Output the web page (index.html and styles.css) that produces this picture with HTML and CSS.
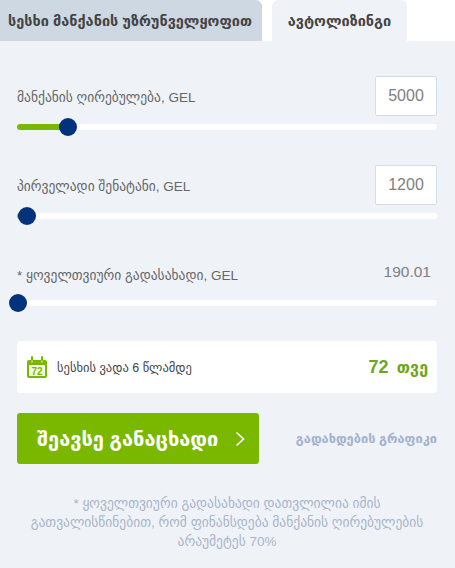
FILE: index.html
```html
<!DOCTYPE html>
<html lang="ka">
<head>
    <meta charset="UTF-8">
    <meta name="viewport" content="width=device-width, initial-scale=1.0">
    <title>ავტოლიზინგი</title>
    <link rel="stylesheet" href="styles.css">
</head>
<body>
<div class="tabs">
    <a href="#" class="tab tab-first">სესხი მანქანის უზრუნველყოფით</a>
    <a href="#" class="tab tab-active">ავტოლიზინგი</a>
</div>

<div class="panel">
    <!-- Sliders -->
    <div class="field field-price">
        <div class="field-top">
            <label class="field-label">მანქანის ღირებულება, GEL</label>
            <div class="field-input">5000</div>
        </div>
        <div class="track">
            <div class="fill" style="width: 51px"><span class="thumb"></span></div>
        </div>
    </div>

    <div class="field field-down">
        <div class="field-top">
            <label class="field-label">პირველადი შენატანი, GEL</label>
            <div class="field-input">1200</div>
        </div>
        <div class="track">
            <div class="fill" style="width: 10px"><span class="thumb"></span></div>
        </div>
    </div>

    <div class="field field-monthly">
        <div class="field-top">
            <label class="field-label">* ყოველთვიური გადასახადი, GEL</label>
            <div class="field-value">190.01</div>
        </div>
        <div class="track">
            <div class="fill" style="width: 1px"><span class="thumb"></span></div>
        </div>
    </div>

    <!-- Loan term -->
    <div class="term">
        <svg class="term-icon" width="20" height="23" viewBox="0 0 20 23">
            <path d="M2 4h16a2 2 0 0 1 2 2v14a2 2 0 0 1-2 2H2a2 2 0 0 1-2-2V6a2 2 0 0 1 2-2z" fill="#7ab800"/>
            <rect x="2" y="9" width="16" height="11" fill="#f4f9e8"/>
            <path d="M5 1v4M15 1v4" stroke="#7ab800" stroke-width="2" stroke-linecap="round" fill="none"/>
            <path d="M5 4.500v2M15 4.500v2" stroke="#fff" stroke-width="1" fill="none"/>
            <text x="10" y="18.500" class="term-icon-text" text-anchor="middle">72</text>
        </svg>
        <span class="term-text">სესხის ვადა 6 წლამდე</span>
        <span class="term-months"><b>72</b> თვე</span>
    </div>

    <!-- Actions -->
    <div class="actions">
        <a href="#" class="btn">
            <span>შეავსე განაცხადი</span>
            <svg width="11" height="16" viewBox="0 0 11 16"><path d="M1.500 1.500 8.500 8l-7 6.500" stroke="#fff" stroke-width="1.600" fill="none"/></svg>
        </a>
        <a href="#" class="schedule">გადახდების გრაფიკი</a>
    </div>

    <p class="note">* ყოველთვიური გადასახადი დათვლილია იმის გათვალისწინებით, რომ ფინანსდება მანქანის ღირებულების არაუმეტეს 70%</p>
</div>
</body>
</html>
```

FILE: styles.css
```css
body {
    font-family: "Liberation Sans", "DejaVu Sans", sans-serif;
    margin: 0;
    padding: 0;
    background-color: white;
    color: #666;
}

.tabs {
    display: flex;
    height: 41px;
}

.tab {
    display: block;
    line-height: 42px;
    font-size: 14.500px;
    font-weight: bold;
    color: #444;
    text-decoration: none;
    text-align: center;
    white-space: nowrap;
}

.tab-first {
    width: 260px;
    padding-right: 2px;
    background-color: #cdd8e3;
    border-radius: 0 6px 0 0;
}

.tab-active {
    width: 135px;
    margin-left: 10px;
    background-color: #eff3f8;
    border-radius: 6px 6px 0 0;
}

.panel {
    height: 527px;
    box-sizing: border-box;
    padding: 35px 18px 0 17px;
    background-color: #eff3f8;
}

.field-top {
    display: flex;
    justify-content: space-between;
    align-items: center;
    height: 40px;
}

.field-label {
    font-size: 13.500px;
    color: #666;
    padding-top: 2px;
}

.field-input {
    width: 60px;
    height: 38px;
    line-height: 37px;
    text-align: center;
    font-size: 16px;
    color: #808080;
    background-color: white;
    border: 1px solid #d3dbe5;
    border-radius: 2px;
}

.field-value {
    font-size: 15.500px;
    color: #808080;
    margin-right: 6px;
    padding-bottom: 6px;
}

.track {
    height: 6px;
    margin-top: 8px;
    background-color: white;
    border-radius: 3px;
}

.fill {
    position: relative;
    height: 6px;
    background-color: #7ab800;
    border-radius: 3px 0 0 3px;
}

.thumb {
    position: absolute;
    right: -9px;
    top: -6px;
    width: 18px;
    height: 18px;
    background-color: #00337c;
    border-radius: 50%;
}

.field-down {
    margin-top: 35px;
}

.field-monthly {
    margin-top: 39px;
}

.field-monthly .field-top {
    height: 34px;
}

.field-monthly .field-label {
    padding-top: 0;
}

.term {
    display: flex;
    align-items: center;
    height: 52px;
    margin-top: 35px;
    padding: 0 9px 0 10px;
    background-color: white;
    border-radius: 4px;
}

.term-icon {
    flex-shrink: 0;
}

.term-icon-text {
    font-size: 10px;
    font-weight: bold;
    fill: #7ab800;
}

.term-text {
    margin-left: 10px;
    font-size: 12.500px;
    color: #444;
}

.term-months {
    margin-left: auto;
    font-size: 16px;
    font-weight: bold;
    word-spacing: 4px;
    color: #6ea61a;
}

.term-months b {
    font-size: 18px;
}

.actions {
    display: flex;
    align-items: center;
    justify-content: space-between;
    margin-top: 20px;
}

.btn {
    display: flex;
    align-items: center;
    justify-content: space-between;
    box-sizing: border-box;
    width: 242px;
    height: 51px;
    padding: 0 13px 0 20px;
    font-size: 20px;
    font-weight: bold;
    color: white;
    text-decoration: none;
    background-color: #7ab800;
    border-radius: 3px;
}

.schedule {
    font-size: 12.800px;
    font-weight: bold;
    color: #a3b1cb;
    text-decoration: none;
    white-space: nowrap;
}

.note {
    margin: 30px 10px 0;
    font-size: 13.500px;
    line-height: 19px;
    text-align: center;
    color: #a9b4c8;
}
```
